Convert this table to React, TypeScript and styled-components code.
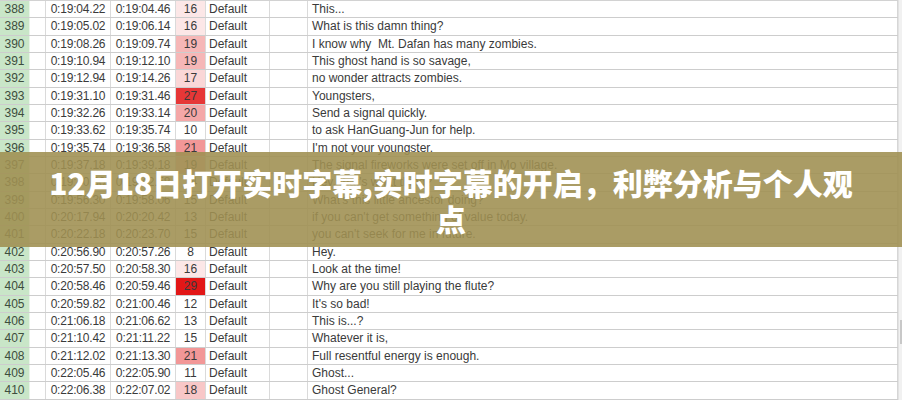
import React from "react";
import styled, { createGlobalStyle } from "styled-components";

const Global = createGlobalStyle`
  html, body { margin: 0; padding: 0; background: #ffffff; }
  body { width: 902px; height: 400px; overflow: hidden; }
  #root { width: 902px; height: 400px; }
`;

type Line = { n: number; s: string; e: string; cps: number; text: string };

const lines: Line[] = [
  { n: 388, s: "0:19:04.22", e: "0:19:04.46", cps: 16, text: "This..." },
  { n: 389, s: "0:19:05.02", e: "0:19:06.14", cps: 16, text: "What is this damn thing?" },
  { n: 390, s: "0:19:08.26", e: "0:19:09.74", cps: 19, text: "I know why  Mt. Dafan has many zombies." },
  { n: 391, s: "0:19:10.94", e: "0:19:12.10", cps: 19, text: "This ghost hand is so savage," },
  { n: 392, s: "0:19:12.94", e: "0:19:14.26", cps: 17, text: "no wonder attracts zombies." },
  { n: 393, s: "0:19:31.10", e: "0:19:31.46", cps: 27, text: "Youngsters," },
  { n: 394, s: "0:19:32.26", e: "0:19:33.14", cps: 20, text: "Send a signal quickly." },
  { n: 395, s: "0:19:33.62", e: "0:19:35.74", cps: 10, text: "to ask HanGuang-Jun for help." },
  { n: 396, s: "0:19:35.74", e: "0:19:36.58", cps: 21, text: "I'm not your youngster." },
  { n: 397, s: "0:19:37.18", e: "0:19:39.18", cps: 19, text: "The signal fireworks were set off in Mo village." },
  { n: 398, s: "0:19:40.90", e: "0:19:42.58", cps: 14, text: "Hey, that's what thing?" },
  { n: 399, s: "0:19:56.30", e: "0:19:58.06", cps: 15, text: "What's this little ancestor doing?" },
  { n: 400, s: "0:20:17.94", e: "0:20:20.42", cps: 13, text: "if you can't get something of value today." },
  { n: 401, s: "0:20:22.18", e: "0:20:23.70", cps: 15, text: "you can't seek for me in future." },
  { n: 402, s: "0:20:56.90", e: "0:20:57.26", cps: 8, text: "Hey." },
  { n: 403, s: "0:20:57.50", e: "0:20:58.30", cps: 16, text: "Look at the time!" },
  { n: 404, s: "0:20:58.46", e: "0:20:59.46", cps: 29, text: "Why are you still playing the flute?" },
  { n: 405, s: "0:20:59.82", e: "0:21:00.46", cps: 12, text: "It's so bad!" },
  { n: 406, s: "0:21:06.18", e: "0:21:06.62", cps: 13, text: "This is...?" },
  { n: 407, s: "0:21:10.42", e: "0:21:11.22", cps: 15, text: "Whatever it is," },
  { n: 408, s: "0:21:12.02", e: "0:21:13.30", cps: 21, text: "Full resentful energy is enough." },
  { n: 409, s: "0:22:05.46", e: "0:22:05.90", cps: 11, text: "Ghost..." },
  { n: 410, s: "0:22:06.38", e: "0:22:07.02", cps: 18, text: "Ghost General?" },
];

const cpsColor = (cps: number) => {
  if (cps <= 15) return "#ffffff";
  const t = Math.min(1, (cps - 14.5) / 15);
  const r = Math.round(255 - t * 30);
  const gb = Math.round(255 - t * 240);
  return `rgb(${r},${gb},${gb})`;
};

const Screen = styled.div`
  position: relative;
  width: 902px;
  height: 400px;
  overflow: hidden;
  display: flex;
  background: #ffffff;
`;

const Grid = styled.div`
  flex: 0 0 898px;
  display: flex;
  flex-direction: column;
  border-top: 1px solid #d2d2d2;
  font-family: "Liberation Sans", Arial, sans-serif;
  font-size: 12px;
  color: #3a3a3a;
`;

const Row = styled.div`
  display: grid;
  grid-template-columns: 30px 16px 65px 65px 30px 64px 38px 1fr;
  height: calc(52px / 3);
  flex: 0 0 calc(52px / 3);
  box-sizing: border-box;
  border-bottom: 1px solid #cdcdcd;
`;

const Cell = styled.div<{ $align?: "left" | "center" }>`
  display: flex;
  align-items: center;
  justify-content: ${(p) => (p.$align === "left" ? "flex-start" : "center")};
  padding-left: ${(p) => (p.$align === "left" ? "3px" : "0")};
  border-right: 1px solid #dadada;
  white-space: pre;
  overflow: hidden;
  line-height: 1;
`;

const NumCell = styled(Cell)`
  background: #c9e6c8;
  color: #3d4d3d;
  border-right-color: #e8f3e8;
`;

const TimeCell = styled(Cell)`
  letter-spacing: -0.2px;
`;

const CpsCell = styled(Cell)<{ $bg: string }>`
  background: ${(p) => p.$bg};
`;

const TextCell = styled(Cell)`
  padding-left: 4px;
  border-right: 1px solid #d6d6d6;
`;

const Scrollbar = styled.div`
  flex: 1 1 auto;
  position: relative;
  background: #f1f1f1;
  border-left: 1px solid #e2e2e2;
`;

const Thumb = styled.div`
  position: absolute;
  left: 1px;
  right: 0;
  top: 320px;
  height: 24px;
  background: #c8c8c8;
`;

const Banner = styled.div`
  position: absolute;
  left: 0;
  right: 0;
  top: 152px;
  height: 95px;
  box-sizing: border-box;
  padding: 0 44px;
  display: flex;
  align-items: center;
  justify-content: center;
  background: rgba(160, 144, 82, 0.89);
`;

const Title = styled.h1`
  margin: 0;
  font-family: "Noto Sans CJK SC", "Noto Sans", sans-serif;
  font-weight: 900;
  font-size: 30px;
  line-height: 36px;
  color: #ffffff;
  text-align: center;
`;

export default function App() {
  return (
    <>
      <Global />
      <Screen>
        <Grid>
          {lines.map((l) => (
            <Row key={l.n}>
              <NumCell>{l.n}</NumCell>
              <Cell />
              <TimeCell>{l.s}</TimeCell>
              <TimeCell>{l.e}</TimeCell>
              <CpsCell $bg={cpsColor(l.cps)}>{l.cps}</CpsCell>
              <Cell $align="left">Default</Cell>
              <Cell />
              <TextCell $align="left">{l.text}</TextCell>
            </Row>
          ))}
        </Grid>
        <Scrollbar>
          <Thumb />
        </Scrollbar>
        <Banner>
          <Title>12月18日打开实时字幕,实时字幕的开启，利弊分析与个人观点</Title>
        </Banner>
      </Screen>
    </>
  );
}
